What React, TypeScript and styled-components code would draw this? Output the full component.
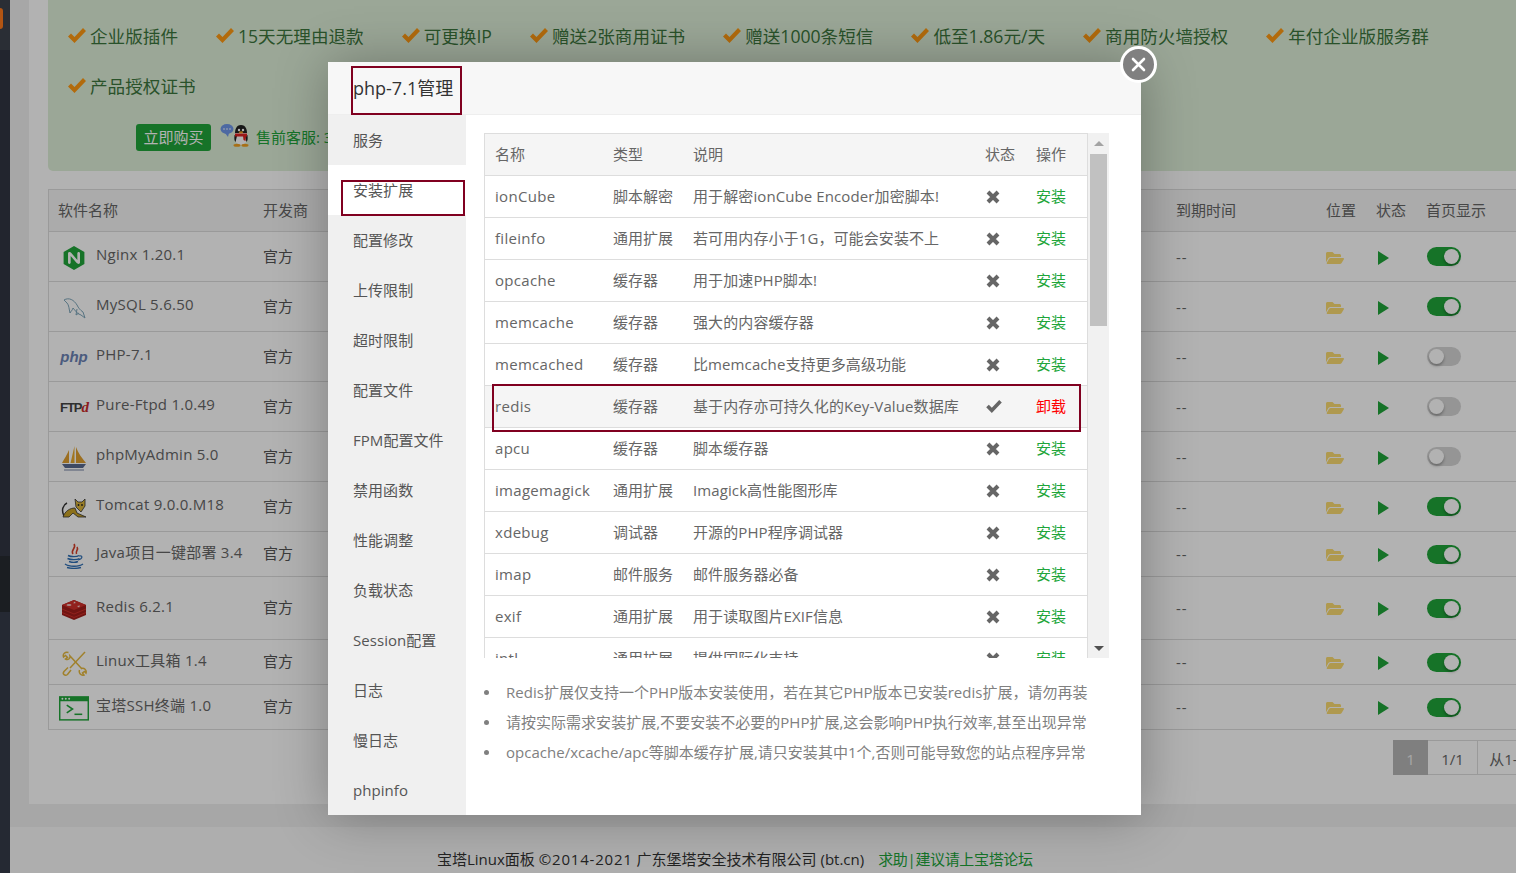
import React from "react";
import styled, { createGlobalStyle } from "styled-components";
import { SiNginx } from "react-icons/si";
import { FaFolderOpen } from "react-icons/fa";

const FONT = `"Open Sans", "Noto Sans CJK SC", sans-serif`;

const Global = createGlobalStyle`
  html, body { margin: 0; padding: 0; height: 100%; overflow: hidden; background: #f0f0f0; }
  * { box-sizing: border-box; }
  body { font-family: ${FONT}; font-size: 15px; color: #666; }
`;

const Page = styled.div`
  display: flex;
  width: 1516px;
  height: 873px;
  overflow: hidden;
  position: relative;
`;
const Sidebar = styled.aside`
  width: 10px;
  flex: none;
  display: flex;
  flex-direction: column;
  overflow: hidden;
`;
const SideBlock = styled.div<{ $h?: number; $bg: string }>`
  flex: ${(p) => (p.$h ? `0 0 ${p.$h}px` : "1")};
  background: ${(p) => p.$bg};
  position: relative;
`;
const SideLogo = styled.div`
  width: 3px;
  height: 21px;
  margin-top: 8px;
  background: #ff7a1c;
  border-radius: 0 5px 5px 0;
`;
const Main = styled.main`
  flex: 1;
  min-width: 0;
  display: flex;
  flex-direction: column;
`;
const Wrap = styled.div`
  flex: 0 0 827px;
  padding-left: 19px;
  overflow: hidden;
`;
const Card = styled.section`
  height: 804px;
  width: 1600px;
  background: #fff;
  padding-left: 19px;
`;
const Banner = styled.div`
  height: 171px;
  background: #dff0d8;
  border-radius: 0 0 0 5px;
  padding: 10px 0 0 20px;
`;
const Features = styled.div`
  display: flex;
  flex-wrap: wrap;
  max-width: 1400px;
  column-gap: 38px;
`;
const Feature = styled.div`
  display: flex;
  align-items: center;
  height: 50px;
  gap: 4px;
  font-size: 17.6px;
  color: #3c763d;
`;
const BuyRow = styled.div`
  display: flex;
  align-items: center;
  padding-left: 68px;
  margin-top: 14px;
  height: 27px;
`;
const BuyBtn = styled.div`
  width: 75px;
  height: 27px;
  line-height: 27px;
  text-align: center;
  background: #20a53a;
  color: #fff;
  border-radius: 3px;
  font-size: 15px;
`;
const QQBox = styled.span`
  display: flex;
  margin: -6px 0 0 9px;
`;
const Presale = styled.span`
  margin: -2px 0 0 6px;
  color: #20a53a;
  font-size: 15px;
  white-space: nowrap;
`;
const SoftTable = styled.div`
  margin-top: 18px;
  border: 1px solid #ddd;
  border-right: 0;
`;
const SoftRow = styled.div<{ $h: number; $head?: boolean }>`
  display: grid;
  grid-template-columns: 205px 913px 150px 50px 50px 1fr;
  align-items: center;
  height: ${(p) => p.$h}px;
  padding-left: 9px;
  padding-bottom: ${(p) => (p.$head ? 2 : 0)}px;
  background: ${(p) => (p.$head ? "#f5f5f5" : "#fff")};
  border-bottom: 1px solid #ddd;
  &:last-child { border-bottom: 0; }
`;
const SoftName = styled.div`
  display: flex;
  align-items: center;
  white-space: nowrap;
`;
const IconBox = styled.span`
  flex: none;
  width: 30px;
  height: 26px;
  margin: 3px 7px 0 1px;
  display: flex;
  align-items: center;
  justify-content: center;
`;
const NameText = styled.span`
  margin-top: -5px;
  letter-spacing: 0.25px;
`;
const Vendor = styled.span`
  margin-top: -3px;
  color: #555;
`;
const Dash = styled.span`
  letter-spacing: 1px;
`;
const PhpLogo = styled.span`
  margin-top: -3px;
  font: italic 700 15px "Liberation Sans", sans-serif;
  color: #6c83b5;
`;
const FtpLogo = styled.span`
  margin-top: -2px;
  font: 700 13px "Liberation Sans", sans-serif;
  letter-spacing: -1px;
  color: #444;
  & > i { color: #c92a2a; font-family: "Liberation Serif", serif; font-size: 15px; }
`;
const Switch = styled.span<{ $on: boolean }>`
  display: block;
  position: relative;
  width: 34px;
  height: 19px;
  border-radius: 10px;
  margin-left: 1px;
  background: ${(p) => (p.$on ? "#20a53a" : "#d6d6d6")};
  &::after {
    content: "";
    position: absolute;
    top: 2px;
    ${(p) => (p.$on ? "right: 2px;" : "left: 2px;")}
    width: 15px;
    height: 15px;
    border-radius: 50%;
    background: #fff;
    box-shadow: 0 2px 3px rgba(0, 0, 0, 0.3);
  }
`;
const Cell = styled.span<{ $pl?: number }>`
  display: flex;
  align-items: center;
  margin-top: 2px;
  padding-left: ${(p) => p.$pl ?? 0}px;
`;
const Pager = styled.div`
  display: flex;
  margin: 10px 0 0 1345px;
  height: 35px;
`;
const PageCell = styled.span<{ $active?: boolean; $w: number }>`
  width: ${(p) => p.$w}px;
  line-height: 36px;
  text-align: center;
  white-space: nowrap;
  background: ${(p) => (p.$active ? "#b7b7b7" : "#fff")};
  color: ${(p) => (p.$active ? "#eee" : "#666")};
  border: 1px solid ${(p) => (p.$active ? "#b7b7b7" : "#ddd")};
  border-left-width: ${(p) => (p.$active ? 1 : 0)}px;
`;
const Footer = styled.footer`
  flex: 1;
  background: #fafafa;
  text-align: left;
  padding: 21px 0 0 427px;
  color: #333;
  white-space: nowrap;
  line-height: 22px;
`;
const FootYear = styled.span`
  letter-spacing: 0.8px;
`;
const FootLink = styled.span`
  color: #20a53a;
  margin-left: 14px;
  letter-spacing: -0.35px;
`;
const Overlay = styled.div`
  position: absolute;
  inset: 0;
  background: rgba(0, 0, 0, 0.3);
`;
const Modal = styled.div`
  position: absolute;
  left: 328px;
  top: 62px;
  width: 813px;
  height: 753px;
  background: #fff;
  display: flex;
  flex-direction: column;
  box-shadow: 1px 1px 50px rgba(0, 0, 0, 0.3);
`;
const CloseBtn = styled.button`
  position: absolute;
  right: -16px;
  top: -16px;
  width: 37px;
  height: 37px;
  padding: 0;
  border-radius: 50%;
  background: #808080;
  border: 3px solid #fff;
  display: flex;
  align-items: center;
  justify-content: center;
  z-index: 2;
`;
const ModalHead = styled.header`
  flex: 0 0 53px;
  background: #f7f7f7;
  border-bottom: 1px solid #eee;
  padding-left: 25px;
  line-height: 52px;
  font-size: 18px;
  color: #333;
  position: relative;
`;
const Mark = styled.div<{ $l: number; $t: number; $w: number; $h: number }>`
  position: absolute;
  left: ${(p) => p.$l}px;
  top: ${(p) => p.$t}px;
  width: ${(p) => p.$w}px;
  height: ${(p) => p.$h}px;
  border: 2px solid #800020;
  pointer-events: none;
`;
const ModalBody = styled.div`
  flex: 1;
  min-height: 0;
  display: flex;
`;
const Menu = styled.nav`
  flex: 0 0 138px;
  background: #f0f0f0;
`;
const MenuItem = styled.div<{ $active?: boolean }>`
  height: 50px;
  line-height: 50px;
  padding-left: 25px;
  color: #555;
  position: relative;
  white-space: nowrap;
  letter-spacing: 0.05px;
  background: ${(p) => (p.$active ? "#fff" : "transparent")};
`;
const Content = styled.div`
  flex: 1;
  padding: 18px 0 0 18px;
`;
const ExtBox = styled.div`
  display: flex;
  height: 525px;
`;
const ExtClip = styled.div`
  width: 604px;
  height: 525px;
  overflow: hidden;
  border-left: 1px solid #ddd;
  border-right: 1px solid #ddd;
  border-top: 1px solid #ddd;
`;
const ExtRow = styled.div<{ $head?: boolean; $hover?: boolean }>`
  display: grid;
  grid-template-columns: 118px 80px 292px 51px 1fr;
  align-items: center;
  height: 42px;
  padding: 0 0 2px 10px;
  border-bottom: 1px solid #ddd;
  white-space: nowrap;
  position: relative;
  z-index: ${(p) => (p.$hover ? 1 : 0)};
  background: ${(p) => (p.$head || p.$hover ? "#f5f5f5" : "#fff")};
`;
const ExtName = styled.span`
  letter-spacing: 0.3px;
`;
const ExtDesc = styled.span`
  letter-spacing: 0.1px;
`;
const StatusIcon = styled.span`
  display: flex;
  margin: 2px 0 0 1px;
`;
const Action = styled.span<{ $off?: boolean }>`
  color: ${(p) => (p.$off ? "#f00" : "#20a53a")};
`;
const Scrollbar = styled.div`
  width: 21px;
  background: #f1f1f1;
  display: flex;
  flex-direction: column;
  align-items: center;
  justify-content: space-between;
  padding: 8px 0 7px;
  position: relative;
`;
const Arrow = styled.span<{ $up?: boolean }>`
  width: 0;
  height: 0;
  border-left: 5px solid transparent;
  border-right: 5px solid transparent;
  ${(p) => (p.$up ? "border-bottom: 5px solid #a3a3a3;" : "border-top: 5px solid #505050;")}
`;
const Thumb = styled.span`
  position: absolute;
  top: 21px;
  left: 2px;
  width: 17px;
  height: 172px;
  background: #c1c1c1;
`;
const Notes = styled.ul`
  margin: 19px 0 0;
  padding: 0 0 0 22px;
  color: #808080;
  list-style: none;
  white-space: nowrap;
`;
const Note = styled.li`
  height: 30px;
  line-height: 30px;
  position: relative;
  letter-spacing: 0.02px;
  &::before {
    content: "";
    position: absolute;
    left: -22px;
    top: 13px;
    width: 5px;
    height: 5px;
    border-radius: 50%;
    background: #808080;
  }
`;

const Check = ({ w = 18, h = 15, c = "#ff9a14" }: { w?: number; h?: number; c?: string }) => (
  <svg width={w} height={h} viewBox="0 0 18 15">
    <polygon points="0,8.5 3,5.5 6.5,9 15,0 18,3 6.5,15" fill={c} />
  </svg>
);
const Cross = () => (
  <svg width="14" height="14" viewBox="0 0 14 14">
    <path d="M2 2 L12 12 M12 2 L2 12" stroke="#666" strokeWidth="4" />
  </svg>
);
const XIcon = () => (
  <svg width="15" height="15" viewBox="0 0 15 15">
    <path d="M2 2 L13 13 M13 2 L2 13" stroke="#fff" strokeWidth="2.6" strokeLinecap="round" />
  </svg>
);
const Play = () => (
  <svg width="11" height="14" viewBox="0 0 11 14">
    <polygon points="0,0 11,7 0,14" fill="#20a53a" />
  </svg>
);
const QQ = () => (
  <svg width="30" height="24" viewBox="0 0 30 24">
    <ellipse cx="7" cy="6" rx="6.5" ry="5" fill="#6f97e8" />
    <path d="M5 10 L9 10 L8 14 Z" fill="#6f97e8" />
    <circle cx="4" cy="6" r=".8" fill="#fff" />
    <circle cx="7" cy="6" r=".8" fill="#fff" />
    <circle cx="10" cy="6" r=".8" fill="#fff" />
    <ellipse cx="21" cy="14" rx="6.5" ry="8" fill="#fff" />
    <path d="M21 2 C16 2 15 7 15 10 L27 10 C27 7 26 2 21 2 Z" fill="#222" />
    <path d="M14.5 12 C14 16 14.5 18 15.5 19 L17 13 Z M27.5 12 C28 16 27.5 18 26.5 19 L25 13 Z" fill="#222" />
    <rect x="15" y="10.5" width="12" height="3" fill="#e02020" />
    <path d="M23 13 L26 13 L25.5 18 L23.5 17 Z" fill="#e02020" />
    <circle cx="19" cy="7" r="1.2" fill="#fff" />
    <circle cx="23" cy="7" r="1.2" fill="#fff" />
    <ellipse cx="21" cy="9.3" rx="2.2" ry="1.1" fill="#f0a020" />
    <ellipse cx="17" cy="22.3" rx="3.5" ry="1.5" fill="#f0a020" />
    <ellipse cx="25" cy="22.3" rx="3.5" ry="1.5" fill="#f0a020" />
  </svg>
);
const Dolphin = () => (
  <svg width="24" height="23" viewBox="0 0 24 23" fill="none" stroke="#7ea6ba" strokeWidth="1">
    <path d="M2 3 C7 0 12 3 15 8 C16.5 11 18 13 21 15 L23 21 L19 18 C15 17 13 13 11 11 C10 14 9 14 8 16 C7 12 7 8 5 6 C4 5 3 4 2 3 Z" />
    <path d="M15 12 L14 18 L17 16" />
  </svg>
);
const Sail = () => (
  <svg width="26" height="25" viewBox="0 0 26 25">
    <path d="M8 4 L8 17 L1 17 C3 13 6 9 8 4 Z" fill="#e0a030" />
    <path d="M13.5 0 L13.5 17 L9.5 17 C11 11 12 6 13.5 0 Z" fill="#e8aa30" />
    <path d="M15 1 C17 7 21 12 25 17 L15 17 Z" fill="#e0a030" />
    <path d="M1 18 L25 18 L22 22 L4 22 Z" fill="#5a6a90" />
    <path d="M3 24 L23 24" stroke="#8a97b5" strokeWidth="1.2" />
  </svg>
);
const Tomcat = () => (
  <svg width="26" height="23" viewBox="0 0 26 23">
    <path d="M3 19 C0 13 2 8 6 6" stroke="#333" strokeWidth="1.5" fill="none" />
    <path d="M2 20 C4 14 9 11 14 11 L16 16 L25 20 L17 20 L12 16 L8 20 Z" fill="#c9a227" stroke="#333" strokeWidth=".8" />
    <path d="M14 2 L17 5 L21 5 L24 2 L24 9 L20 15 L15 10 Z" fill="#dcb53a" stroke="#333" strokeWidth=".8" />
    <circle cx="17.5" cy="8" r=".9" fill="#222" />
    <circle cx="21" cy="8" r=".9" fill="#222" />
  </svg>
);
const JavaCup = () => (
  <svg width="22" height="26" viewBox="0 0 22 26">
    <path d="M11 1 C14 5 7 7 10 11 M14 4 C16 7 12 8 13.5 11" stroke="#d6402a" strokeWidth="1.6" fill="none" />
    <path d="M5 12.5 C8 14 14 14 16 12.5 M4.5 15.5 C8 17 14 17 16.5 15.5 M6 18.5 C9 19.5 13 19.5 15 18.5" stroke="#2f6fb5" strokeWidth="1.4" fill="none" />
    <path d="M16 13 C20 12 20 16 15 17" stroke="#2f6fb5" strokeWidth="1.2" fill="none" />
    <path d="M2 21 C6 24 16 24 20 21 M4 24.5 C8 25.5 14 25.5 18 24.5" stroke="#2f6fb5" strokeWidth="1.4" fill="none" />
  </svg>
);
const RedisIcon = () => (
  <svg width="26" height="22" viewBox="0 0 26 22">
    <path d="M1 6 L13 1 L25 6 L25 16 L13 21 L1 16 Z" fill="#a31f1a" />
    <path d="M1 6 L13 11 L25 6 L13 1 Z" fill="#d1302a" />
    <path d="M1 10 L13 15 L25 10 M1 13.5 L13 18.5 L25 13.5" stroke="#d1302a" strokeWidth="1" fill="none" />
    <ellipse cx="8" cy="6" rx="2.5" ry="1" fill="#f2c6c4" />
    <path d="M13 2.5 L15 4 L12.5 4.5 Z M16 7 L19 6.5 L18 8.5 Z" fill="#f5d5d3" />
  </svg>
);
const Tools = () => (
  <svg width="26" height="26" viewBox="0 0 26 26" fill="none" stroke="#e6b93f" strokeWidth="1.5">
    <path d="M24 1 L9 17" />
    <path d="M7 16.5 L3 20.5 C1 23 4 25.5 6.5 23.5 L10 19" />
    <path d="M7.5 1.5 C4 0.5 1.5 3 2.5 6 L4.5 4.5 L6.5 6.5 L4.5 8 C7 9.5 9.5 7.5 9 5 L21 18" />
    <path d="M18.5 19 C17.5 22 20 25 23 24 L21.5 22 L23.5 20.5 L25 22 C26 19 23 16.5 20.5 17.5" />
  </svg>
);
const Terminal = () => (
  <svg width="31" height="25" viewBox="0 0 31 25">
    <rect x=".75" y=".75" width="29.5" height="23.5" fill="none" stroke="#20a53a" strokeWidth="1.5" />
    <rect x="0" y="0" width="31" height="5" fill="#20a53a" />
    <circle cx="3.5" cy="2.5" r="1" fill="#fff" />
    <circle cx="7" cy="2.5" r="1" fill="#fff" />
    <circle cx="10.5" cy="2.5" r="1" fill="#fff" />
    <path d="M8 9 L14 13 L8 17" fill="none" stroke="#20a53a" strokeWidth="1.6" />
    <path d="M16 18.5 L24 18.5" stroke="#20a53a" strokeWidth="1.6" />
  </svg>
);

const features = ["企业版插件", "15天无理由退款", "可更换IP", "赠送2张商用证书", "赠送1000条短信", "低至1.86元/天", "商用防火墙授权", "年付企业版服务群", "产品授权证书"];

const soft: { name: string; h: number; on: boolean; icon: React.ReactNode }[] = [
  { name: "Nginx 1.20.1", h: 50, on: true, icon: <SiNginx size={24} color="#20a53a" /> },
  { name: "MySQL 5.6.50", h: 50, on: true, icon: <Dolphin /> },
  { name: "PHP-7.1", h: 50, on: false, icon: <PhpLogo>php</PhpLogo> },
  { name: "Pure-Ftpd 1.0.49", h: 50, on: false, icon: <FtpLogo>FTP<i>d</i></FtpLogo> },
  { name: "phpMyAdmin 5.0", h: 50, on: false, icon: <Sail /> },
  { name: "Tomcat 9.0.0.M18", h: 50, on: true, icon: <Tomcat /> },
  { name: "Java项目一键部署 3.4", h: 45, on: true, icon: <JavaCup /> },
  { name: "Redis 6.2.1", h: 63, on: true, icon: <RedisIcon /> },
  { name: "Linux工具箱 1.4", h: 45, on: true, icon: <Tools /> },
  { name: "宝塔SSH终端 1.0", h: 44, on: true, icon: <Terminal /> },
];

const menu = ["服务", "安装扩展", "配置修改", "上传限制", "超时限制", "配置文件", "FPM配置文件", "禁用函数", "性能调整", "负载状态", "Session配置", "日志", "慢日志", "phpinfo"];

const exts = [
  ["ionCube", "脚本解密", "用于解密ionCube Encoder加密脚本!"],
  ["fileinfo", "通用扩展", "若可用内存小于1G，可能会安装不上"],
  ["opcache", "缓存器", "用于加速PHP脚本!"],
  ["memcache", "缓存器", "强大的内容缓存器"],
  ["memcached", "缓存器", "比memcache支持更多高级功能"],
  ["redis", "缓存器", "基于内存亦可持久化的Key-Value数据库"],
  ["apcu", "缓存器", "脚本缓存器"],
  ["imagemagick", "通用扩展", "Imagick高性能图形库"],
  ["xdebug", "调试器", "开源的PHP程序调试器"],
  ["imap", "邮件服务", "邮件服务器必备"],
  ["exif", "通用扩展", "用于读取图片EXIF信息"],
  ["intl", "通用扩展", "提供国际化支持"],
];

const notes = [
  "Redis扩展仅支持一个PHP版本安装使用，若在其它PHP版本已安装redis扩展，请勿再装",
  "请按实际需求安装扩展,不要安装不必要的PHP扩展,这会影响PHP执行效率,甚至出现异常",
  "opcache/xcache/apc等脚本缓存扩展,请只安装其中1个,否则可能导致您的站点程序异常",
];

export default function App() {
  return (
    <Page>
      <Global />
      <Sidebar>
        <SideBlock $h={50} $bg="#3d424d"><SideLogo /></SideBlock>
        <SideBlock $h={506} $bg="#313642" />
        <SideBlock $h={56} $bg="#272b31" />
        <SideBlock $bg="#363c49" />
      </Sidebar>
      <Main>
        <Wrap>
          <Card>
            <Banner>
              <Features>
                {features.map((f) => (
                  <Feature key={f}><Check />{f}</Feature>
                ))}
              </Features>
              <BuyRow>
                <BuyBtn>立即购买</BuyBtn>
                <QQBox><QQ /></QQBox>
                <Presale>售前客服: 3007255432</Presale>
              </BuyRow>
            </Banner>
            <SoftTable>
              <SoftRow $h={42} $head>
                <span>软件名称</span><span>开发商</span><span>到期时间</span><span>位置</span><span>状态</span><span>首页显示</span>
              </SoftRow>
              {soft.map((s) => (
                <SoftRow key={s.name} $h={s.h}>
                  <SoftName><IconBox>{s.icon}</IconBox><NameText>{s.name}</NameText></SoftName>
                  <Vendor>官方</Vendor>
                  <Dash>--</Dash>
                  <Cell><FaFolderOpen size={18} color="#fbdc72" /></Cell>
                  <Cell $pl={2}><Play /></Cell>
                  <Switch $on={s.on} />
                </SoftRow>
              ))}
            </SoftTable>
            <Pager>
              <PageCell $active $w={35}>1</PageCell>
              <PageCell $w={50}>1/1</PageCell>
              <PageCell $w={84}>从1-10条</PageCell>
            </Pager>
          </Card>
        </Wrap>
        <Footer>
          宝塔Linux面板 <FootYear>©2014-2021</FootYear> 广东堡塔安全技术有限公司 (bt.cn)<FootLink>求助|建议请上宝塔论坛</FootLink>
        </Footer>
      </Main>
      <Overlay>
        <Modal>
          <CloseBtn aria-label="close"><XIcon /></CloseBtn>
          <ModalHead>
            php-7.1管理
            <Mark $l={23} $t={4} $w={111} $h={49} />
          </ModalHead>
          <ModalBody>
            <Menu>
              {menu.map((m, i) => (
                <MenuItem key={m} $active={i === 1}>
                  {m}
                  {i === 1 && <Mark $l={13} $t={15} $w={124} $h={36} />}
                </MenuItem>
              ))}
            </Menu>
            <Content>
              <ExtBox>
                <ExtClip>
                  <ExtRow $head>
                    <span>名称</span><span>类型</span><span>说明</span><span>状态</span><span>操作</span>
                  </ExtRow>
                  {exts.map(([n, t, d]) => {
                    const on = n === "redis";
                    return (
                      <ExtRow key={n} $hover={on}>
                        <ExtName>{n}</ExtName><span>{t}</span><ExtDesc>{d}</ExtDesc>
                        <StatusIcon>{on ? <Check w={16} h={13} c="#666" /> : <Cross />}</StatusIcon>
                        <Action $off={on}>{on ? "卸载" : "安装"}</Action>
                        {on && <Mark $l={7} $t={-2} $w={589} $h={48} />}
                      </ExtRow>
                    );
                  })}
                </ExtClip>
                <Scrollbar>
                  <Arrow $up />
                  <Thumb />
                  <Arrow />
                </Scrollbar>
              </ExtBox>
              <Notes>
                {notes.map((n) => <Note key={n}>{n}</Note>)}
              </Notes>
            </Content>
          </ModalBody>
        </Modal>
      </Overlay>
    </Page>
  );
}
